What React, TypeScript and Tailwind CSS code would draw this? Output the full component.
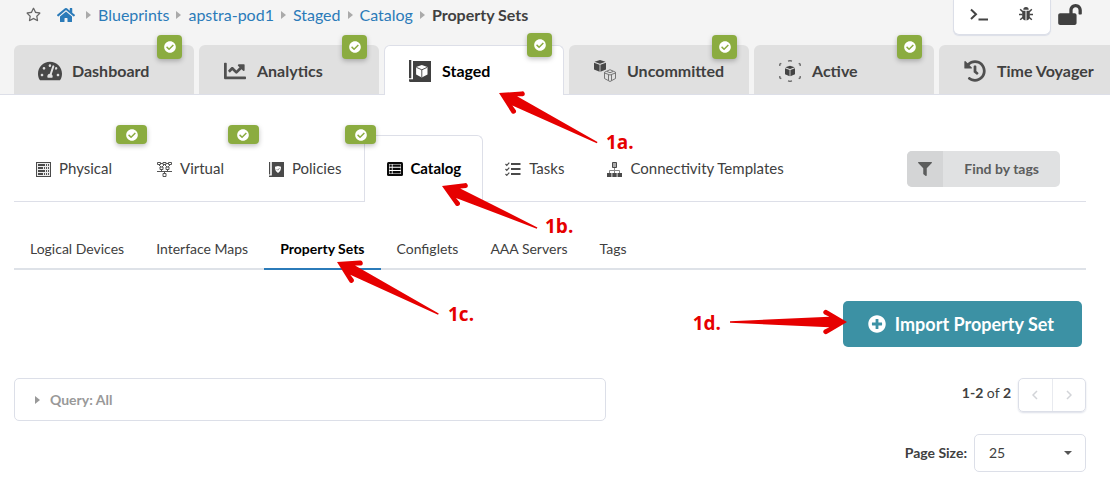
import { useState, type ReactNode } from "react";
import {
  FaChartLine,
  FaCheckCircle,
  FaFilter,
  FaHistory,
  FaHome,
  FaLockOpen,
  FaPlusCircle,
  FaRegStar,
  FaTachometerAlt,
} from "react-icons/fa";

function StagedIcon() {
  return (
    <svg viewBox="0 0 22 22" className="size-[22px]" aria-hidden="true">
      <path d="M0 0h2.3v18.2H0zM4 1h18v21H1.2A1.2 1.2 0 0 1 0 20.800v-1.600h4z" fill="#404040" />
      <path d="M12.800 5l5.700 2v7.400l-5.700 3-5.700-3V7z" fill="#fff" />
      <path d="M7.300 7.300l5.500 2.500 5.500-2.500M12.800 9.800v7.400" stroke="#404040" strokeWidth=".9" fill="none" />
    </svg>
  );
}

function UncommittedIcon() {
  return (
    <svg viewBox="0 0 22 22" className="size-[22px]" aria-hidden="true">
      <path d="M6 0l5.500 1.800L6 3.700.5 1.800zM0 2.800l5.600 1.900v7.100L0 9.500zM12 2.800L6.400 4.700v7.100L12 9.500z" fill="#484848" />
      <g fill="none" stroke="#6a6a6a" strokeWidth=".9">
        <path d="M16 9.700l5.500 2.500v6.300L16 21.500l-5.500-3v-6.300z" />
        <path d="M10.500 13l5.500 2 5.500-2M14.500 15v5.500M17.500 15v5.500M13 11.500l3 1.200 3-1.200" />
      </g>
    </svg>
  );
}

function ActiveIcon() {
  return (
    <svg viewBox="0 0 22 22" className="size-[22px]" aria-hidden="true">
      <path d="M11 5.700l4.700 1.600L11 9.100 6.300 7.300zM6 8.200l4.600 1.700v6.400L6 14.300zM16 8.200l-4.600 1.700v6.400l4.600-2z" fill="#444" />
      <path
        d="M9 1.200L11 .6l2 .6M9 20.800l2 .6 2-.6M.8 6V4.200l1.500-.8M21.200 6V4.200l-1.500-.8M.8 16v1.800l1.500.8M21.200 16v1.800l-1.500.8"
        fill="none"
        stroke="#666"
        strokeWidth="1.300"
      />
    </svg>
  );
}

function PhysicalIcon() {
  return (
    <svg viewBox="0 0 15 15" className="size-[15px]" aria-hidden="true">
      <path d="M0 0h15v15H0z" fill="#4a4a4a" />
      <path d="M1 1h13v13H1z" fill="#ececec" />
      <path d="M2 2h7v2H2zM2 5h5v2H2zM2 8h7v2H2zM2 11h5v2H2z" fill="#4a4a4a" />
      <path
        d="M10 2h1v2h-1zM12 2h1v2h-1zM8 5h1v2H8zM10 5h1v2h-1zM12 5h1v2h-1zM10 8h1v2h-1zM12 8h1v2h-1zM8 11h1v2H8zM10 11h1v2h-1zM12 11h1v2h-1z"
        fill="#555"
      />
    </svg>
  );
}

function VirtualIcon() {
  return (
    <svg viewBox="0 0 15 15" className="size-[15px]" aria-hidden="true">
      <g fill="none" stroke="#555" strokeWidth="1">
        <path d="M.5.500h3v2h-3zM6 .5h3v2H6zM11.500.5h3v2h-3zM3 5h3v2.500H3zM9 5h3v2.500H9zM6 11.500h3v3H6z" />
        <path d="M2 3l2 2M7 3L5 5M8 3l2 2M13 3l-2 2M0 9.500h15M4.500 7.500v2M10.500 7.500v2M7.500 9.500v2M3.500 1.500H6M9 1.500h2.500" />
      </g>
    </svg>
  );
}

function PoliciesIcon() {
  return (
    <svg viewBox="0 0 15 15" className="size-[15px]" aria-hidden="true">
      <path d="M0 0h1.200v12.600H0zM2.800 0H15v15H.6a.6.6 0 0 1-.6-.6v-1h2.800z" fill="#4a4a4a" />
      <path d="M9 3.900l3 .9c0 2.800-.7 4.800-3 6.300-2.300-1.500-3-3.500-3-6.300z" fill="#fff" />
      <path d="M7.700 7.200l1 1 1.800-2" fill="none" stroke="#777" strokeWidth=".9" />
    </svg>
  );
}

function CatalogIcon() {
  return (
    <svg viewBox="0 0 16 14" className="h-3.5 w-4" aria-hidden="true">
      <rect width="16" height="14" rx="1.500" fill="#0a0a0a" />
      <path d="M2 2h12v10H2z" fill="#fff" />
      <path d="M2.500 2.500h2.300v2.300H2.500zM2.500 5.800h2.300v2.300H2.500zM2.500 9.100h2.300v2.300H2.500zM5.600 2.500h8v2.300h-8zM5.600 5.800h8v2.300h-8zM5.600 9.100h8v2.300h-8z" fill="#0a0a0a" />
    </svg>
  );
}

function TasksIcon() {
  return (
    <svg viewBox="0 0 16 14" className="h-3.5 w-4" fill="none" stroke="#4a4a4a" aria-hidden="true">
      <path d="M.5 2l1.300 1.300L4.300.6M.5 7l1.300 1.300 2.500-2.700M.5 12l1.300 1.300 2.500-2.700" strokeWidth="1.200" />
      <path d="M6 2h9.500M6 7h9.500M6 12h9.500" strokeWidth="1.800" />
    </svg>
  );
}

function TemplatesIcon() {
  return (
    <svg viewBox="0 0 15 15" className="size-[15px]" aria-hidden="true">
      <path d="M5.500.5h4v5h-4z" fill="#aaa" stroke="#4a4a4a" />
      <path d="M7.500 6v5M2.500 11V8.500h10V11" fill="none" stroke="#888" />
      <path d="M0 11h4.500v4H0zM5.300 11h4.400v4H5.300zM10.500 11H15v4h-4.500z" fill="#4a4a4a" />
    </svg>
  );
}

function PromptIcon() {
  return (
    <svg viewBox="0 0 18 13" className="h-[13px] w-[18px]" fill="none" stroke="#444" strokeWidth="2" aria-hidden="true">
      <path d="M1 1.500L6 6.300 1 11M8.500 11.500H18" />
    </svg>
  );
}

function BugIcon() {
  return (
    <svg viewBox="0 0 14 14" className="size-3.5" aria-hidden="true">
      <path d="M4.300 2.800a2.700 2.700 0 0 1 5.400 0zM3.200 3.800h3.300v9.600c-2.200-.2-3.300-1.900-3.300-4.200zM10.800 3.800H7.500v9.600c2.200-.2 3.300-1.900 3.300-4.200z" fill="#444" />
      <path d="M1.200 2.200l2.500 2.500M12.800 2.200l-2.500 2.500M0 7.500h3.500M14 7.500h-3.500M1.200 12.800L4 10.300M12.800 12.800L10 10.300" stroke="#444" strokeWidth="1.500" />
    </svg>
  );
}

function Caret({ className }: { className: string }) {
  return (
    <svg viewBox="0 0 5 8" className={className} aria-hidden="true">
      <path d="M0 0l5 4-5 4z" fill="currentColor" />
    </svg>
  );
}

const crumbs = ["Blueprints", "apstra-pod1", "Staged", "Catalog"];

const mainTabs: { label: string; icon: ReactNode; ok: boolean }[] = [
  { label: "Dashboard", icon: <FaTachometerAlt size={24} color="#484848" />, ok: true },
  { label: "Analytics", icon: <FaChartLine size={22} color="#505050" />, ok: true },
  { label: "Staged", icon: <StagedIcon />, ok: true },
  { label: "Uncommitted", icon: <UncommittedIcon />, ok: true },
  { label: "Active", icon: <ActiveIcon />, ok: true },
  { label: "Time Voyager", icon: <FaHistory size={22} color="#505050" />, ok: false },
];

const subTabs: { label: string; icon: ReactNode; ok: boolean }[] = [
  { label: "Physical", icon: <PhysicalIcon />, ok: true },
  { label: "Virtual", icon: <VirtualIcon />, ok: true },
  { label: "Policies", icon: <PoliciesIcon />, ok: true },
  { label: "Catalog", icon: <CatalogIcon />, ok: false },
  { label: "Tasks", icon: <TasksIcon />, ok: false },
  { label: "Connectivity Templates", icon: <TemplatesIcon />, ok: false },
];

const catalogTabs = ["Logical Devices", "Interface Maps", "Property Sets", "Configlets", "AAA Servers", "Tags"];

function Arrow({ length, angle, className }: { length: number; angle: number; className: string }) {
  return (
    <svg width="1" height="1" className={`pointer-events-none absolute overflow-visible ${className}`} aria-hidden="true">
      <path
        transform={`rotate(${angle})`}
        fill="#e60000"
        d={`M0 0L19.500-11.600A2.400 2.400 0 0 1 22.800-7.800L17.600-5.200L${length}-.8V.8L17.600 5.200L22.800 7.800A2.400 2.400 0 0 1 19.500 11.600Z`}
      />
    </svg>
  );
}

function Step({ children, className }: { children: string; className: string }) {
  return (
    <span
      className={`pointer-events-none absolute font-['Open_Sans',sans-serif] text-[19px] leading-6 font-bold text-[#e60000] ${className}`}
    >
      {children}
    </span>
  );
}

export default function App() {
  const [mainTab, setMainTab] = useState("Staged");
  const [subTab, setSubTab] = useState("Catalog");
  const [catalogTab, setCatalogTab] = useState("Property Sets");

  return (
    <div className="relative min-h-screen overflow-x-clip bg-white font-[Lato,sans-serif] text-sm text-[#404040]">
      <header className="border-b border-[#dddfe8] bg-[#f4f4f4]">
        <div className="flex h-[45px] items-start pr-7 pl-[26px]">
          <nav aria-label="Breadcrumb" className="flex h-[29px] flex-1 items-center text-base">
            <button aria-label="Favorite" className="mr-4 text-[#666]">
              <FaRegStar size={15} />
            </button>
            <a href="#home" aria-label="Home" className="mr-1 text-[#2b7bb9]">
              <FaHome size={18} />
            </a>
            {crumbs.map((crumb) => (
              <span key={crumb} className="flex items-center">
                <span className="flex w-[19px] justify-center text-[#aaa]">
                  <Caret className="h-2 w-[5px]" />
                </span>
                <a href={`#${crumb}`} className="text-[#2b7bb9]">
                  {crumb}
                </a>
              </span>
            ))}
            <span className="flex w-[19px] justify-center text-[#aaa]">
              <Caret className="h-2 w-[5px]" />
            </span>
            <span className="font-bold">Property Sets</span>
          </nav>
          <div className="mr-[7px] flex h-[35px] items-center gap-[31px] rounded-b-md border border-t-0 border-[#dcdfe8] bg-white pr-[17px] pb-1.5 pl-4 shadow-[0_1px_1px_#dcdfe8]">
            <button aria-label="Command line">
              <PromptIcon />
            </button>
            <button aria-label="Report a problem">
              <BugIcon />
            </button>
          </div>
          <button aria-label="Unlock" className="pt-1">
            <FaLockOpen className="h-[21px] w-6" />
          </button>
        </div>
        <nav aria-label="Blueprint" className="-mb-px flex gap-[5px] pl-3.5">
          {mainTabs.map((tab) => {
            const active = tab.label === mainTab;
            return (
              <button
                key={tab.label}
                onClick={() => setMainTab(tab.label)}
                className={`relative flex h-[50px] w-[180px] shrink-0 items-center gap-2.5 rounded-t-md text-base font-bold ${
                  active
                    ? "border border-b-0 border-[#dddfe8] bg-white pt-px pl-[23px] text-black"
                    : "border-b border-[#dddfe8] bg-[#e0e0e0] pt-[3px] pl-6"
                }`}
              >
                <span className="flex w-6 items-center justify-center">{tab.icon}</span>
                {tab.label}
                {tab.ok && (
                  <span
                    className={`absolute flex h-6 w-[25px] items-center justify-center rounded-sm bg-[#8bac40] text-white shadow-[0_2px_5px_rgba(0,0,0,0.25)] ${
                      active ? "-top-[13px] right-[11px]" : "-top-2.5 right-3"
                    }`}
                  >
                    <FaCheckCircle size={12} />
                  </span>
                )}
              </button>
            );
          })}
        </nav>
      </header>

      <main className="pr-6 pl-3.5">
        <div className="mt-10 flex items-stretch">
          <nav aria-label="Staged" className="flex">
            {subTabs.map((tab) => {
              const active = tab.label === subTab;
              return (
                <button
                  key={tab.label}
                  onClick={() => setSubTab(tab.label)}
                  className={`relative flex h-[67px] items-center border-[#dddfe8] pl-[22px] text-[15px] ${
                    active ? "gap-[7px] rounded-t-md border-x border-t font-bold text-black" : "gap-2 border-b pt-0.5"
                  } ${tab.ok ? "pr-[23px]" : "pr-[21px]"}`}
                >
                  {tab.icon}
                  {tab.label}
                  {tab.ok && (
                    <span className="absolute -top-2.5 -right-3 z-10 flex h-[19px] w-[31px] items-center justify-center rounded-sm bg-[#8bac40] text-white shadow-[0_2px_5px_rgba(0,0,0,0.25)]">
                      <FaCheckCircle size={12} />
                    </span>
                  )}
                </button>
              );
            })}
          </nav>
          <div className="flex flex-1 items-center justify-end border-b border-[#dddfe8] pt-0.5 pr-[26px]">
            <button className="flex h-9 items-center overflow-hidden rounded-[5px] bg-[#e0e1e2] font-bold text-[#5c5d5d]">
              <span className="flex h-full w-9 items-center justify-center bg-[#d4d5d6]">
                <FaFilter size={14} />
              </span>
              <span className="px-[21px]">Find by tags</span>
            </button>
          </div>
        </div>

        <nav aria-label="Catalog" className="mt-7 flex border-b-2 border-[#dee2e8]">
          {catalogTabs.map((label) => (
            <button
              key={label}
              onClick={() => setCatalogTab(label)}
              className={`-mb-0.5 h-10 border-b-2 px-4 ${
                label === catalogTab ? "border-[#2b7bb9] font-bold text-black" : "border-transparent"
              }`}
            >
              {label}
            </button>
          ))}
        </nav>

        <div className="mt-[31px] flex justify-end pr-1">
          <button className="flex h-[46px] items-center gap-[9px] rounded-[5px] bg-[#3c91a4] pr-7 pl-[25px] text-lg font-bold text-white">
            <FaPlusCircle size={18} />
            Import Property Set
          </button>
        </div>

        <div className="mt-[31px] flex items-start justify-between">
          <button className="flex h-[43px] max-w-[592px] flex-1 items-center gap-2.5 rounded-[5px] border border-[#dcdfe8] px-5 font-bold text-[#999]">
            <Caret className="h-2 w-[5px]" />
            Query: All
          </button>
          <div className="flex flex-col items-end gap-[22px]">
            <div className="flex items-center gap-[7px]">
              <span className="pb-1">
                <b>1-2</b> of <b>2</b>
              </span>
              <div className="flex h-[34px] w-[68px] rounded-[5px] border border-[#dcdfe8] text-[#d2d4d8] shadow-[0_1px_2px_#dcdfe8]">
                {["Previous page", "Next page"].map((label, i) => (
                  <button
                    key={label}
                    aria-label={label}
                    disabled
                    className={`flex flex-1 items-center justify-center ${i ? "border-l border-[#e8eaef]" : ""}`}
                  >
                    <svg viewBox="0 0 6 10" className="h-2.5 w-1.5" fill="none" stroke="currentColor" strokeWidth="1.500">
                      <path d={i ? "M1 1l4 4-4 4" : "M5 1L1 5l4 4"} />
                    </svg>
                  </button>
                ))}
              </div>
            </div>
            <div className="flex items-center gap-[7px]">
              <label htmlFor="page-size" className="font-bold">
                Page Size:
              </label>
              <div className="relative">
                <select
                  id="page-size"
                  defaultValue="25"
                  className="h-[38px] w-28 appearance-none rounded-[5px] border border-[#dcdfe8] bg-white px-3.5"
                >
                  <option>10</option>
                  <option>25</option>
                  <option>50</option>
                </select>
                <svg viewBox="0 0 8 4" className="pointer-events-none absolute top-[17px] right-3.5 h-1 w-2" aria-hidden="true">
                  <path d="M0 0h8L4 4z" fill="#555" />
                </svg>
              </div>
            </div>
          </div>
        </div>
      </main>

      <Arrow className="top-[93px] left-[499px]" angle={26.8} length={110} />
      <Step className="top-[130px] left-[606px]">1a.</Step>
      <Arrow className="top-[186px] left-[442px]" angle={23.9} length={104} />
      <Step className="top-[214px] left-[545px]">1b.</Step>
      <Arrow className="top-[262px] left-[337px]" angle={27.2} length={114} />
      <Step className="top-[302px] left-[448px]">1c.</Step>
      <Arrow className="top-[322px] right-[262px]" angle={180} length={117} />
      <Step className="top-[311px] right-[389px]">1d.</Step>
    </div>
  );
}
